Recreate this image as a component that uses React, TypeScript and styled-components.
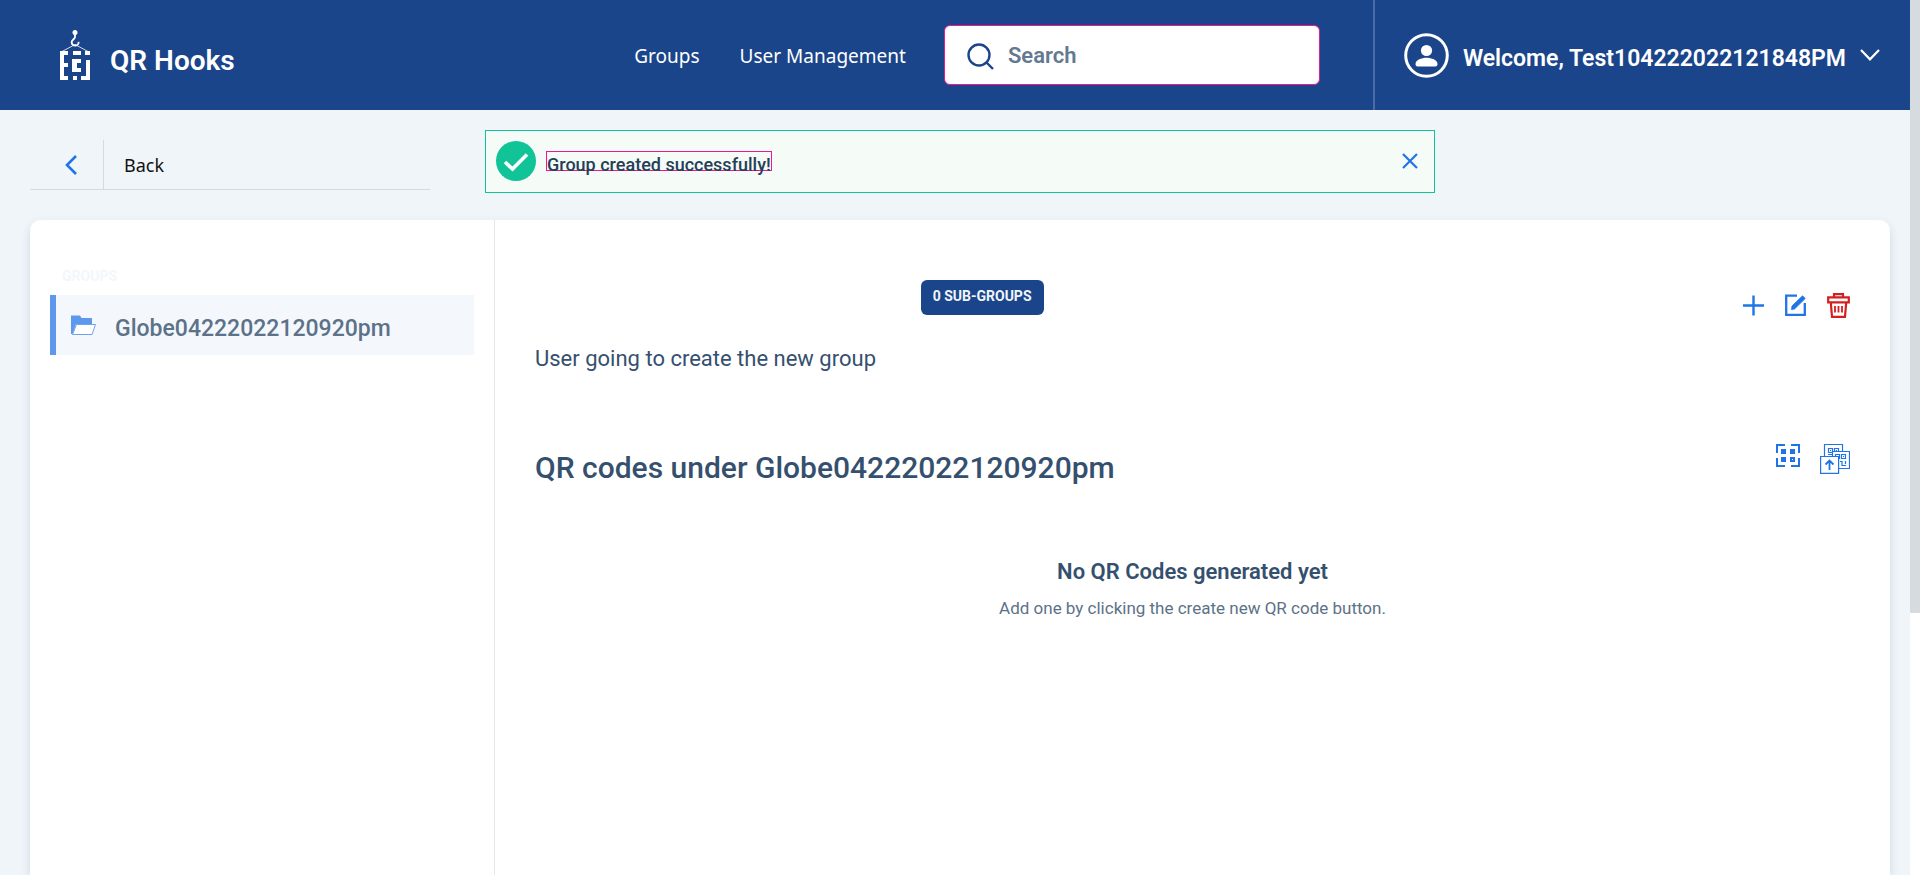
import React from 'react';
import styled, { createGlobalStyle } from 'styled-components';

const color = {
  navy: '#1b458a',
  page: '#f0f5fa',
  ink: '#35506e',
  muted: '#5c7288',
  action: '#1f74e8',
  folder: '#5e98ec',
  green: '#10c498',
  pink: '#f01590',
  red: '#d41f1f',
};

const GlobalStyle = createGlobalStyle`
  *, *::before, *::after { box-sizing: border-box; }
  body {
    margin: 0;
    background: #fff;
    color: ${color.ink};
    font-family: Roboto, 'Liberation Sans', sans-serif;
  }
  h1, h2, h3, p, ul { margin: 0; padding: 0; }
  button { padding: 0; border: 0; background: none; color: inherit; font: inherit; cursor: pointer; }
  a { color: inherit; text-decoration: none; }
  svg { display: block; flex: none; }
`;

const Window = styled.div`
  position: relative;
  display: flex;
  height: 100vh;
  overflow: hidden;
`;

const Page = styled.div`
  flex: 1;
  min-width: 0;
  display: flex;
  flex-direction: column;
  background: ${color.page};
`;

const ScrollTrack = styled.div`
  width: 10px;
  background: #fff;
`;

const ScrollThumb = styled.div`
  height: 70%;
  background: #d5dbdf;
`;

const Header = styled.header`
  flex: none;
  display: flex;
  align-items: center;
  height: 110px;
  padding-left: 60px;
  background: ${color.navy};
  color: #fff;
`;

const Brand = styled.a`
  display: flex;
  align-items: center;
  gap: 20px;
  font-size: 28px;
  line-height: 32px;
  font-weight: 600;
`;

const BrandName = styled.span`
  padding-top: 12px;
`;

const Nav = styled.nav`
  display: flex;
  gap: 40px;
  margin-left: auto;
  padding-top: 2px;
  font-family: 'Noto Sans', sans-serif;
  font-size: 19px;
  line-height: 28px;
`;

const SearchBox = styled.label`
  display: flex;
  align-items: center;
  gap: 14px;
  width: 376px;
  height: 60px;
  margin: 0 53px 0 38px;
  padding: 2px 22px 0;
  border: 1px solid ${color.pink};
  border-radius: 6px;
  background: #fff;
  color: ${color.navy};
`;

const SearchInput = styled.input`
  flex: 1;
  min-width: 0;
  padding: 0;
  border: 0;
  outline: 0;
  background: none;
  color: ${color.ink};
  font: 600 22px/28px Roboto, sans-serif;
  &::placeholder { color: #627991; opacity: 1; }
`;

const UserMenu = styled.button`
  display: flex;
  align-items: center;
  gap: 14px;
  height: 100%;
  padding: 0 30px 0 29px;
  border-left: 2px solid #4a6ba4;
  font-size: 23px;
  line-height: 28px;
  font-weight: 600;
  white-space: nowrap;
`;

const UserName = styled.span`
  padding-top: 8px;
`;

const BackBar = styled.div`
  flex: none;
  width: 400px;
  height: 50px;
  margin: 30px 0 30px 30px;
  border-bottom: 1px solid #d5dade;
`;

const BackButton = styled.button`
  display: flex;
  align-items: center;
  height: 100%;
  color: #111;
  font-family: 'Noto Sans', sans-serif;
  font-size: 18px;
`;

const BackIcon = styled.span`
  display: flex;
  align-items: center;
  justify-content: center;
  width: 74px;
  height: 100%;
  margin-right: 20px;
  padding-left: 8px;
  border-right: 1px solid #d5dade;
  color: ${color.action};
`;

const Toast = styled.div`
  position: absolute;
  top: 130px;
  left: 50%;
  transform: translateX(-50%);
  display: flex;
  align-items: center;
  width: 950px;
  height: 63px;
  padding: 0 16px 1px 10px;
  border: 1px solid ${color.green};
  background: #f5fbf7;
`;

const ToastText = styled.p`
  margin: 0 auto 0 10px;
  height: 20px;
  border: 1px solid ${color.pink};
  color: #263e58;
  font-size: 18px;
  line-height: 25px;
  font-weight: 500;
`;

const ToastClose = styled.button`
  color: ${color.action};
`;

const Card = styled.main`
  flex: 1;
  display: flex;
  margin: 0 20px 0 30px;
  border-radius: 10px 10px 0 0;
  background: #fff;
  box-shadow: 0 4px 10px rgba(40, 70, 110, 0.16);
`;

const Sidebar = styled.aside`
  width: 465px;
  padding: 46px 20px 0;
  border-right: 1px solid #e4e8ec;
`;

const SidebarTitle = styled.h2`
  padding: 0 12px;
  color: #f3f7fc;
  font-size: 14px;
  line-height: 20px;
  font-weight: 700;
`;

const GroupItem = styled.a`
  display: flex;
  align-items: center;
  gap: 19px;
  height: 60px;
  margin-top: 9px;
  padding-left: 15px;
  border-left: 6px solid ${color.folder};
  background: #f4f8fd;
  color: ${color.muted};
  font-size: 23px;
  line-height: 28px;
  font-weight: 500;
`;

const GroupName = styled.span`
  padding-top: 8px;
`;

const Content = styled.section`
  flex: 1;
  padding: 60px 40px 0;
`;

const SummaryRow = styled.div`
  display: grid;
  grid-template-columns: 68% 32%;
  align-items: start;
`;

const Badge = styled.span`
  justify-self: center;
  height: 35px;
  padding: 0 12px;
  border-radius: 6px;
  background: ${color.navy};
  color: #f0f5fa;
  font-size: 14px;
  line-height: 32px;
  font-weight: 700;
`;

const Actions = styled.div<{ $gap: number }>`
  display: flex;
  align-items: flex-start;
  justify-content: flex-end;
  gap: ${(p) => p.$gap}px;
  padding-top: 13px;
  color: ${color.action};
`;

const DeleteButton = styled.button`
  color: ${color.red};
`;

const Description = styled.p`
  margin-top: 26px;
  font-size: 22px;
  line-height: 30px;
`;

const CodesRow = styled.div`
  display: flex;
  justify-content: space-between;
  margin-top: 57px;
`;

const CodesTitle = styled.h1`
  padding-top: 17px;
  font-size: 30px;
  line-height: 40px;
  font-weight: 500;
`;

const EmptyState = styled.div`
  margin-top: 69px;
  text-align: center;
`;

const EmptyTitle = styled.h3`
  font-size: 22px;
  line-height: 30px;
  font-weight: 600;
`;

const EmptyHint = styled.p`
  margin-top: 8px;
  color: ${color.muted};
  font-size: 17px;
  line-height: 26px;
`;

const Logo = () => (
  <svg width="30" height="50" viewBox="0 0 30 50" fill="#fff" aria-hidden="true">
    <circle cx="15" cy="2.5" r="2.5" />
    <path d="M15 4v3c0 2-3.4 2.700-3.400 5.400a3.500 3.500 0 0 0 7-.6" fill="none" stroke="#fff" strokeWidth="1.800" />
    <path d="M2 21.500L15 14.500L28 21.500" fill="none" stroke="#fff" strokeWidth="0.800" />
    <path d="M0 21h8v4H4v8h4v4H4v9h4v4H0zM13 21h8v4h-8zM25 21h5v4h-5zM26 30h4v20h-9v-4h5zM12 29h9v4h-4v5h4v4h-9zM13 46h4v4h-4z" />
  </svg>
);

const SearchIcon = () => (
  <svg width="27" height="28" viewBox="0 0 27 28" fill="none" stroke="currentColor" strokeWidth="2.400" aria-hidden="true">
    <circle cx="12" cy="13" r="10.500" />
    <path d="M19.500 20.500L26 27" />
  </svg>
);

const AvatarIcon = () => (
  <svg width="45" height="45" viewBox="0 0 45 45" fill="#fff" aria-hidden="true">
    <circle cx="22.500" cy="22.500" r="20.800" fill="none" stroke="#fff" strokeWidth="3" />
    <circle cx="22.500" cy="17.500" r="5.600" />
    <path d="M11.500 31c0-4 6-6.200 11-6.200s11 2.200 11 6.200c0 1.500-.8 2.500-2 2.500h-18c-1.200 0-2-1-2-2.500z" />
  </svg>
);

const ChevronDown = () => (
  <svg width="20" height="12" viewBox="0 0 20 12" fill="none" stroke="currentColor" strokeWidth="2.200" aria-hidden="true">
    <path d="M1 1l9 9.300L19 1" />
  </svg>
);

const ChevronLeft = () => (
  <svg width="12" height="20" viewBox="0 0 12 20" fill="none" stroke="currentColor" strokeWidth="2.600" aria-hidden="true">
    <path d="M11 1l-9 9 9 9" />
  </svg>
);

const CheckIcon = () => (
  <svg width="40" height="40" viewBox="0 0 40 40" fill="none" aria-hidden="true">
    <circle cx="20" cy="20" r="20" fill={color.green} />
    <path d="M9 21l7.500 7L31 13.500" stroke="#fff" strokeWidth="3.600" />
  </svg>
);

const CloseIcon = () => (
  <svg width="16" height="16" viewBox="0 0 16 16" fill="none" stroke="currentColor" strokeWidth="2.200" aria-hidden="true">
    <path d="M1 1l14 14M15 1L1 15" />
  </svg>
);

const FolderIcon = () => (
  <svg width="25" height="20" viewBox="0 0 25 20" aria-hidden="true">
    <path d="M0 .5h9l1.500 2.500H21v6H5L1.500 19H0z" fill={color.folder} />
    <path d="M5.500 9.500h19l-3.500 10H1.500z" fill="#fff" stroke={color.folder} strokeWidth="0.900" />
  </svg>
);

const PlusIcon = () => (
  <svg width="21" height="25" viewBox="0 0 21 25" fill="none" stroke="currentColor" strokeWidth="2.400" aria-hidden="true">
    <path d="M10.500 2.500v20M0 12.500h21" />
  </svg>
);

const EditIcon = () => (
  <svg width="21" height="25" viewBox="0 0 21 25" fill="none" stroke="currentColor" aria-hidden="true">
    <path d="M12 2.700H1.200V21.800h18.600V10" strokeWidth="2.300" />
    <path d="M6.500 16.500l.5-3.500L17.500 2.800l2.700 2.700L9.500 16z" fill="currentColor" strokeWidth="0.800" />
  </svg>
);

const TrashIcon = () => (
  <svg width="23" height="25" viewBox="0 0 23 25" fill="none" stroke="currentColor" strokeWidth="2.200" aria-hidden="true">
    <path d="M7 4V1.200h9V4M1.200 4.300h20.600v5H1.200zM3.800 9.500L5 23.800h13l1.200-14.300" />
    <path d="M8 13v6.500M11.500 13v6.500M15 13v6.500" strokeWidth="1.800" />
  </svg>
);

const QrIcon = () => (
  <svg width="24" height="24" viewBox="0 0 24 24" fill="currentColor" aria-hidden="true">
    <path d="M0 0h9v2H2v7H0zM15 0h9v9h-2V2h-7zM0 14h2v7h7v2H0zM22 14h2v9h-9v-2h7z" />
    <path d="M5 5h5v5H5zM14 5h5v5h-5zM5 13h5v5H5z" />
    <path d="M15 14h3v3h-3z" fill="none" stroke="currentColor" strokeWidth="2" />
  </svg>
);

const BulkUploadIcon = () => (
  <svg width="30" height="30" viewBox="0 0 30 30" fill="#fff" stroke="currentColor" strokeWidth="1.200" aria-hidden="true">
    <path d="M4.500.500h18v18h-18z" />
    <path d="M8.500 4.500h4v4h-4zM14.500 4.500h4v4h-4zM10 6.500h1M16 6.500h1M8 10.500h10" />
    <path d="M12.500 7.500h17v17h-17z" />
    <path d="M15.500 10.500h4v4h-4zM21.500 10.500h4v4h-4zM17 12.500h1M23 12.500h1M20 17.500h2v4h4M25.500 17v3M15 17.500h4" />
    <path d="M.600 12.500h18v16.900H.600z" />
    <path d="M9.500 26v-9M5.500 20.500l4-4 4 4" fill="none" strokeWidth="1.800" />
  </svg>
);

export default function App() {
  return (
    <>
      <GlobalStyle />
      <Window>
        <Page>
          <Header>
            <Brand href="#">
              <Logo />
              <BrandName>QR Hooks</BrandName>
            </Brand>
            <Nav>
              <a href="#groups">Groups</a>
              <a href="#users">User Management</a>
            </Nav>
            <SearchBox>
              <SearchIcon />
              <SearchInput type="text" placeholder="Search" aria-label="Search" />
            </SearchBox>
            <UserMenu type="button">
              <AvatarIcon />
              <UserName>Welcome, Test104222022121848PM</UserName>
              <ChevronDown />
            </UserMenu>
          </Header>
          <BackBar>
            <BackButton type="button">
              <BackIcon>
                <ChevronLeft />
              </BackIcon>
              Back
            </BackButton>
          </BackBar>
          <Card>
            <Sidebar>
              <SidebarTitle>GROUPS</SidebarTitle>
              <GroupItem href="#group">
                <FolderIcon />
                <GroupName>Globe04222022120920pm</GroupName>
              </GroupItem>
            </Sidebar>
            <Content>
              <SummaryRow>
                <Badge>0 SUB-GROUPS</Badge>
                <Actions $gap={21}>
                  <button type="button" aria-label="Add group"><PlusIcon /></button>
                  <button type="button" aria-label="Edit group"><EditIcon /></button>
                  <DeleteButton type="button" aria-label="Delete group"><TrashIcon /></DeleteButton>
                </Actions>
              </SummaryRow>
              <Description>User going to create the new group</Description>
              <CodesRow>
                <CodesTitle>QR codes under Globe04222022120920pm</CodesTitle>
                <Actions $gap={20}>
                  <button type="button" aria-label="Create QR code"><QrIcon /></button>
                  <button type="button" aria-label="Bulk upload"><BulkUploadIcon /></button>
                </Actions>
              </CodesRow>
              <EmptyState>
                <EmptyTitle>No QR Codes generated yet</EmptyTitle>
                <EmptyHint>Add one by clicking the create new QR code button.</EmptyHint>
              </EmptyState>
            </Content>
          </Card>
        </Page>
        <ScrollTrack>
          <ScrollThumb />
        </ScrollTrack>
        <Toast role="status">
          <CheckIcon />
          <ToastText>Group created successfully!</ToastText>
          <ToastClose type="button" aria-label="Dismiss"><CloseIcon /></ToastClose>
        </Toast>
      </Window>
    </>
  );
}
